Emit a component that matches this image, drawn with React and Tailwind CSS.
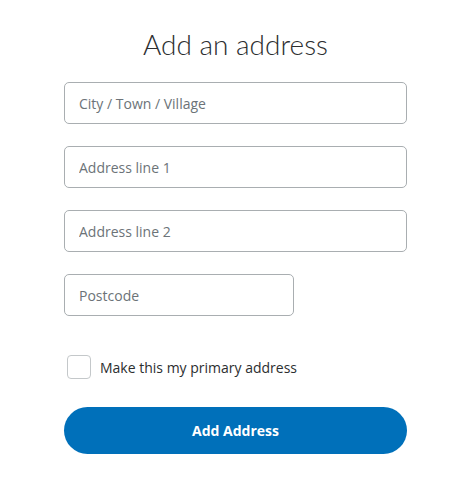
export default function App() {
  return (
    <div className="w-[475px] h-[480px] bg-white" style={{ fontFamily: '"Open Sans", sans-serif' }}>
      <div className="w-[343px] ml-[64px] pt-[27px]">
        <h1 className="text-center text-[28px] leading-[34px] font-light text-[#2c2e2f]" style={{ fontFamily: 'Lato, sans-serif' }}>
          Add an address
        </h1>
        <div className="mt-[21px] flex flex-col gap-[22px]">
          <input
            autoFocus
            placeholder="City / Town / Village"
            className="h-[42px] w-full rounded-[5px] border border-[#a9aeb1] px-[14px] text-[14px] text-[#2c2e2f] placeholder:text-[#6c7378] caret-[#2c2e2f] outline-none"
          />
          <input
            placeholder="Address line 1"
            className="h-[42px] w-full rounded-[5px] border border-[#a9aeb1] px-[14px] text-[14px] text-[#2c2e2f] placeholder:text-[#6c7378] outline-none"
          />
          <input
            placeholder="Address line 2"
            className="h-[42px] w-full rounded-[5px] border border-[#a9aeb1] px-[14px] text-[14px] text-[#2c2e2f] placeholder:text-[#6c7378] outline-none"
          />
          <input
            placeholder="Postcode"
            className="h-[42px] w-[230px] rounded-[5px] border border-[#a9aeb1] px-[14px] text-[14px] text-[#2c2e2f] placeholder:text-[#6c7378] outline-none"
          />
        </div>
        <label className="mt-[39px] ml-[3px] flex items-center gap-[9px]">
          <span className="block w-[24px] h-[24px] rounded-[4px] border border-[#c4c8ca] bg-white" />
          <span className="text-[14px] text-[#2c2e2f]">Make this my primary address</span>
        </label>
        <button className="mt-[28px] w-full h-[47px] rounded-full bg-[#0070ba] text-white text-[14px] font-bold">
          Add Address
        </button>
      </div>
    </div>
  );
}
